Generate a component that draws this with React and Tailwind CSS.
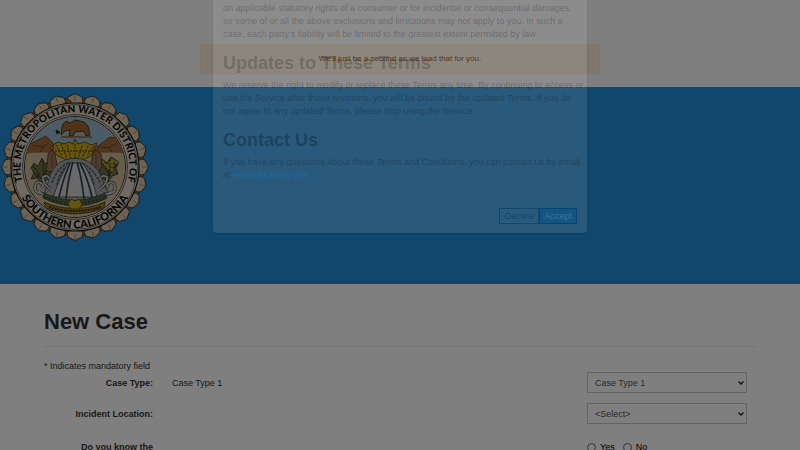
import React from "react";

const scallops = Array.from({ length: 24 }, (_, i) => i * 15);

function Seal() {
  return (
    <svg viewBox="0 0 150 150" className="block size-[150px]" role="img" aria-label="Water district seal">
      <defs>
        <path id="seal-top" d="M23.2 91.8 A54.500 54.500 0 1 1 126.8 91.8" />
        <path id="seal-bottom" d="M13.500 75 A61.500 61.500 0 0 0 136.500 75" />
        <clipPath id="seal-clip">
          <circle cx="75" cy="75" r="50" />
        </clipPath>
      </defs>
      {scallops.map((a) => (
        <g key={a} transform={`rotate(${a} 75 75)`}>
          <path d="M82 6.500 L85 7 L88 10 L88 15 L80 15 Z" fill="#966c38" stroke="#2c1f10" strokeWidth=".6" />
          <path d="M75 1.5 L78 3 L82 5 L83 9 L80.500 13 L69.500 13 L67 9 L68 5 L72 3 Z" fill="#d9c6a4" stroke="#2e2418" strokeWidth=".8" />
          <path d="M75 2 V8" stroke="#8a6a3a" strokeWidth=".7" />
        </g>
      ))}
      <circle cx="75" cy="75" r="64" fill="#ddd3c2" stroke="#17130e" strokeWidth="1.200" />
      <circle cx="75" cy="75" r="62.500" fill="none" stroke="#17130e" strokeWidth=".5" />
      <circle cx="75" cy="75" r="52.500" fill="none" stroke="#17130e" strokeWidth=".6" />
      <circle cx="75" cy="75" r="50.500" fill="#cdbb98" stroke="#17130e" strokeWidth=".9" />
      <g clipPath="url(#seal-clip)">
        <g transform="translate(0 -4)">
          <path d="M20 20 H130 V66 H20 Z" fill="#98b8c8" />
          <path d="M24 66 L30 56 L46 48 L51 53 L62 66 H24 Z M88 66 L98 58 L110 49 L118 50 L127 66 Z" fill="#a06c3a" stroke="#4d3012" strokeWidth=".7" />
          <path d="M33 57 L43 59 L49 55 M43 59 L39 66 M100 59 L109 60 L117 55 M109 60 L114 66" fill="none" stroke="#5d3a16" strokeWidth=".7" />
          <path d="M20 66 Q50 62 75 68 Q104 62 130 66 V130 H20 Z" fill="#cdbb98" />
          <path d="M31 80 L34 75 L38 78 L42 70 L45 76 L50 72 L53 78 L51 84 L47 92 L40 94 L37 90 L31 91 L34 85 Z M98 78 L102 71 L107 75 L111 69 L119 74 L116 80 L118 86 L112 88 L108 94 L102 90 Z" fill="#6d7042" stroke="#2c3a22" strokeWidth=".8" />
          <path d="M33 78 L39 86 L36 90 M43 73 L44 92 M50 77 L43 88 M33 84 L41 90 M102 75 L110 87 M117 76 L106 90 M110 72 L109 90" fill="none" stroke="#27341e" strokeWidth="1.400" strokeDasharray="2 1" />
          <path d="M102 73 L107 79 L112 72 L118 75 M107 79 L113 83 M112 72 L112 82" fill="none" stroke="#c09f22" strokeWidth="2.200" strokeDasharray="3 1" />
          <path d="M61 47 L62 40 L63 36 L66 33 L70 35 L75 32 L84 34 L88 38 L90 47 L86 48 L84 43 L75 44 L73 48 L69 48 L70 42 L65 43 Z" fill="#a1682e" stroke="#33200d" strokeWidth=".8" />
          <path d="M61 49 H92" stroke="#9a602d" strokeWidth="1.700" />
          <path d="M56 42 L60 44 L57 46 Z" fill="#222" stroke="#222" />
          <path d="M53 57 L58 54 L64 56 L69 54 L73 56 L75 51 L78 56 L85 54 L91 57 L97 55 L94 62 L91 68 L83 72 H67 L58 68 L53 63 Z" fill="#c9aa1e" stroke="#4a3908" strokeWidth=".8" />
          <path d="M56 57 L62 68 M61 56 L67 70 M67 57 L71 71 M94 58 L87 68 M88 58 L82 70 M82 58 L78 71 M75 56 V71 M55 63 H94" stroke="#4f4006" strokeWidth="1" strokeDasharray="2 1" />
          <path d="M46 83 Q48 72 48 66 L52 62 L55 66 L57 77 L53 84 Z M90 79 L93 66 L96 62 L101 66 L102 78 L98 84 Z" fill="#9b765d" stroke="#4d2e1d" strokeWidth=".8" />
          <path d="M52 66 V80 M96 66 V80" stroke="#5d3f2c" strokeWidth=".7" />
          <circle cx="52" cy="60" r="2" fill="#a5785a" stroke="#45301e" strokeWidth=".5" />
          <circle cx="96" cy="60" r="2" fill="#a5785a" stroke="#45301e" strokeWidth=".5" />
          <path d="M48 95 Q51 77 65 72 Q76 68 87 73 Q100 80 104 96 L109 107 Q76 122 43 108 Z" fill="#a9a9ab" stroke="#36444b" strokeWidth=".8" />
          <path d="M52 95 Q57 80 68 75 M100 95 Q93 80 82 75 M57 97 Q60 82 69 77 M94 97 Q91 82 81 77" fill="none" stroke="#43545c" strokeWidth="1.500" strokeDasharray="3 1" />
          <path d="M68 75 Q60 89 53 109 H97 Q91 84 82 75 Z" fill="#d2d2d4" stroke="#34434c" strokeWidth=".8" />
          <path d="M70 75 Q63 91 59 109 M73 74 Q68 91 66 111 M80 75 Q88 91 92 109 M77 74 Q82 91 84 111" fill="none" stroke="#2f4049" strokeWidth="1.700" />
          <path d="M50 105 Q34 108 35 98 Q36 93 41 95 Q45 97 41 100 M50 101 Q42 95 43 89 Q48 86 50 91 M51 107 Q42 108 39 103 M100 105 Q116 108 115 98 Q114 93 109 95 Q105 97 109 100 M100 101 Q108 95 107 89 Q102 86 100 91 M99 107 Q108 108 111 103" fill="none" stroke="#3d4b50" strokeWidth="3.200" />
          <path d="M50 105 Q34 108 35 98 Q36 93 41 95 Q45 97 41 100 M50 101 Q42 95 43 89 Q48 86 50 91 M51 107 Q42 108 39 103 M100 105 Q116 108 115 98 Q114 93 109 95 Q105 97 109 100 M100 101 Q108 95 107 89 Q102 86 100 91 M99 107 Q108 108 111 103" fill="none" stroke="#c8cccb" strokeWidth="1.800" />
          <path d="M44 105 Q75 120 105 105 L107 110 Q76 126 43 110 Z" fill="#536642" stroke="#202a16" strokeWidth=".7" />
          <path d="M45 109 Q75 122 105 109" fill="none" stroke="#252f1b" strokeDasharray="2 2" />
          <path d="M44 114 L51 117 Q75 124 98 117 L105 114 L104 120 Q75 132 46 120 Z" fill="#9c8135" stroke="#3b2c08" strokeWidth=".8" />
          <path d="M49 119 Q75 127 101 119" fill="none" stroke="#3e2d08" strokeWidth="2" strokeDasharray="2 1" />
          <path d="M68 116 L71 111 L75 113 L79 111 L82 116 L79 121 H71 Z" fill="#c9aa27" stroke="#514009" strokeWidth=".7" />
        </g>
      </g>
      <g fill="#0d0b08" className="font-['Liberation_Sans_Narrow','Lato','Liberation_Sans',sans-serif] font-black">
        <text textAnchor="middle" className="text-[10px]">
          <textPath href="#seal-top" startOffset="50%">THE METROPOLITAN WATER DISTRICT OF</textPath>
        </text>
        <text textAnchor="middle" className="text-[11px]">
          <textPath href="#seal-bottom" startOffset="50%">SOUTHERN CALIFORNIA</textPath>
        </text>
      </g>
    </svg>
  );
}

function Select({ id, options }) {
  return (
    <div className="relative">
      <select id={id} className="block h-[21px] w-full appearance-none border border-[#c8c8c8] bg-white px-[7px] text-[9px] leading-[18px] text-[#555]">
        {options.map((o) => (
          <option key={o}>{o}</option>
        ))}
      </select>
      <svg viewBox="0 0 6 4" className="pointer-events-none absolute top-[9px] right-[3px] h-1 w-1.5" fill="none" stroke="#222" strokeWidth="1.300">
        <path d="M.5 .5 L3 3 L5.500 .5" />
      </svg>
    </div>
  );
}

const row = "grid grid-cols-[109px_1fr_160px] gap-x-[19px] pr-[9px]";
const label = "text-right font-bold";

export default function App() {
  return (
    <div className="relative h-screen overflow-hidden bg-white font-['Liberation_Sans',Arial,sans-serif] text-[9px] leading-3 text-[#333]">
      <header>
        <div className="h-[87px]" />
        <div className="h-[197px] bg-[#228fd8] pt-[5px]">
          <Seal />
        </div>
      </header>

      <main className="px-11 pt-6">
        <h1 className="border-b border-[#eaeaea] pb-[10px] text-[22px] leading-7 font-bold">New Case</h1>
        <form>
          <p className="mt-[13px]">* Indicates mandatory field</p>
          <div className={`${row} items-center`}>
            <label htmlFor="case-type" className={label}>Case Type:</label>
            <span>Case Type 1</span>
            <Select id="case-type" options={["Case Type 1"]} />
          </div>
          <div className={`${row} mt-[10px] items-center`}>
            <label htmlFor="location" className={label}>Incident Location:</label>
            <span />
            <Select id="location" options={["<Select>"]} />
          </div>
          <div className={`${row} mt-[17px]`} role="radiogroup" aria-labelledby="know-label">
            <span id="know-label" className={label}>Do you know the</span>
            <span />
            <div className="flex gap-2">
              {["Yes", "No"].map((v) => (
                <label key={v} className="flex items-center gap-1 text-black">
                  <input type="radio" name="know" className="size-[9px] appearance-none rounded-full border border-[#666] bg-white" />
                  {v}
                </label>
              ))}
            </div>
          </div>
        </form>
      </main>

      <div className="absolute inset-0 bg-black/50" />

      <div className="absolute inset-x-0 top-11 flex justify-center">
        <div role="status" className="flex h-[30px] w-1/2 items-center justify-center rounded-xs border border-[#7a6238]/10 bg-[#84694c]/30 text-[8px] leading-3 text-[#3a2408]">
          We'll just be a second as we load that for you.
        </div>
      </div>

      <div className="absolute inset-x-0 top-0 flex justify-center">
        <section role="dialog" aria-label="Terms and Conditions" className="w-[374px] rounded-b-[4px] bg-white/10 px-[10px] pt-[2px] pb-[9px] leading-[13px] whitespace-nowrap text-black/25 shadow-sm">
          <p>
            on applicable statutory rights of a consumer or for incidental or consequential damages,<br />
            so some of or all the above exclusions and limitations may not apply to you. In such a<br />
            case, each party's liability will be limited to the greatest extent permitted by law.
          </p>
          <h2 className="mt-[10px] text-[18px] leading-6 font-bold text-black/20">Updates to These Terms</h2>
          <p className="mt-1">
            We reserve the right to modify or replace these Terms any time. By continuing to access or<br />
            use the Service after those revisions, you will be bound by the updated Terms. If you do<br />
            not agree to any updated Terms, please stop using the Service.
          </p>
          <h2 className="mt-[10px] text-[18px] leading-6 font-bold">Contact Us</h2>
          <p className="mt-1">
            If you have any questions about these Terms and Conditions, you can contact us by email<br />
            at <a href="mailto:email@caseiq.com" className="text-[#0c78b8]/70">email@caseiq.com</a>.
          </p>
          <div className="mt-[26px] flex justify-end">
            <button type="button" className="h-4 border border-[#003a68]/60 px-1 text-[9px] leading-3 text-[#00406c]/70">Decline</button>
            <button type="button" className="h-4 border border-[#003a68]/60 bg-[#00508c]/50 px-1 text-[9px] leading-3 text-[#78a8c8]/40">Accept</button>
          </div>
        </section>
      </div>
    </div>
  );
}
